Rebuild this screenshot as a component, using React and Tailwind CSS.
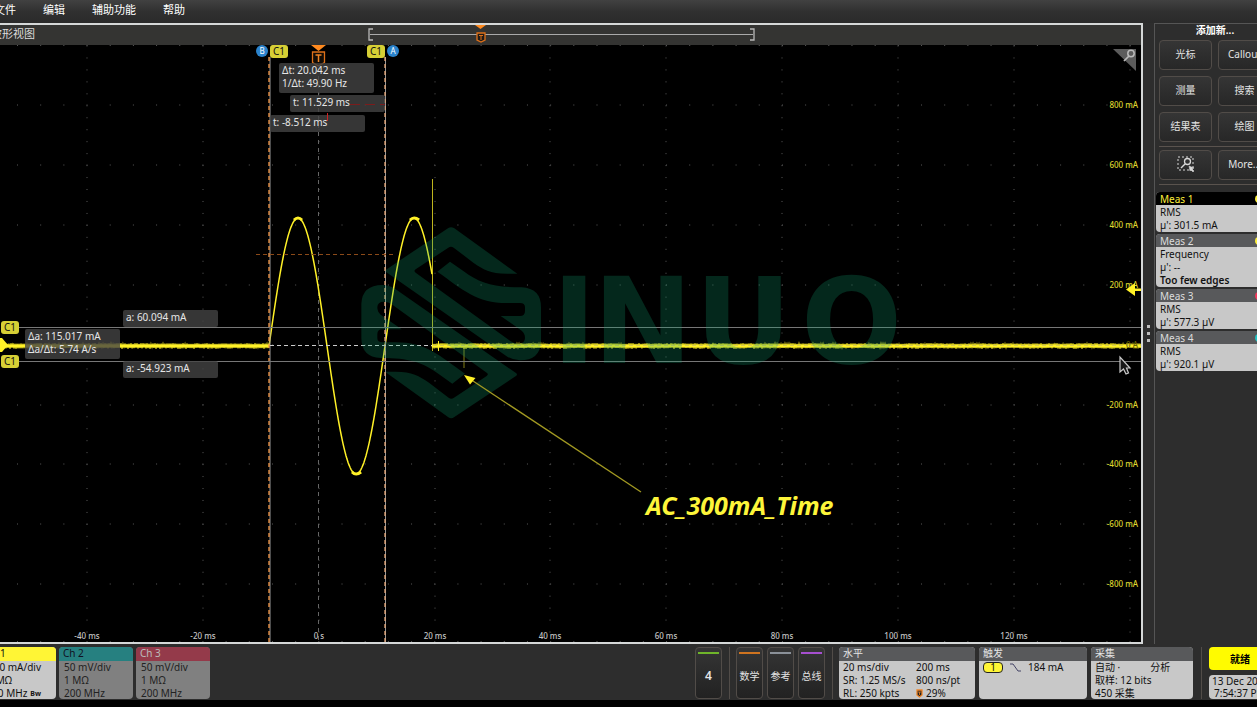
const MENU = ['编辑', '辅助功能', '帮助'];
const ADD_BUTTONS = ['光标', 'Callout', '测量', '搜索', '结果表', '绘图'];

const MEASUREMENTS = [
  { name: 'Meas 1', lines: ['RMS', "µ': 301.5 mA"], dot: 'bg-[#fdf03a]', active: true },
  { name: 'Meas 2', lines: ['Frequency', "µ': --"], warning: 'Too few edges', dot: 'bg-[#fdf03a]' },
  { name: 'Meas 3', lines: ['RMS', "µ': 577.3 µV"], dot: 'bg-[#f0365a]' },
  { name: 'Meas 4', lines: ['RMS', "µ': 920.1 µV"], dot: 'bg-[#1fc4c4]' },
];

const X_DIVS = [87, 203, 319, 435, 550, 666, 782, 898, 1014, 1130];
const Y_DIVS = [105, 165, 225, 285, 345, 405, 464, 524, 584];
const X_LABELS = ['-40 ms', '-20 ms', '0 s', '20 ms', '40 ms', '60 ms', '80 ms', '100 ms', '120 ms'];
const Y_LABELS = ['800 mA', '600 mA', '400 mA', '200 mA', '0 A', '-200 mA', '-400 mA', '-600 mA', '-800 mA'];

// sampled 50 Hz sine between the trigger and the cut-off
function sinePath() {
  const pts = [];
  for (let x = 269; x <= 432; x += 1) {
    const y = 346 - 128 * Math.cos((2 * Math.PI * (x - 298)) / 116);
    pts.push(`${x} ${y.toFixed(1)}`);
  }
  return `M${pts.join('L')}`;
}

// small noise on the zero level
function noisePath(from, to) {
  const pts = [];
  for (let x = from; x <= to; x += 1) {
    const n = Math.sin(x * 12.9898) * 43758.5453;
    const r = n - Math.floor(n);
    pts.push(`${x} ${(x % 2 ? 344 - r : 347 + r * 2).toFixed(1)}`);
  }
  return `M${pts.join('L')}`;
}

const LOGO_HALF =
  'M108 149L295 24Q303 19 312 24L502 161H470C420 161 400 148 370 128L311 83Q303 77 295 83L197 148Q190 153 197 158L480 362Q492 371 505 371Q525 371 525 354Q525 340 515 332L452 288H510Q525 288 525 273V262Q525 249 510 249H470C380 249 340 210 262 155L300 125L340 153C390 190 430 202 515 202Q573 205 573 262V365Q570 421 510 421Q490 421 472 410L108 156Q104 152 108 149Z';

export default function App() {
  return (
    <div className="min-h-screen overflow-hidden bg-black font-['Noto_Sans','Noto_Sans_CJK_SC',sans-serif] text-[10px] leading-3 text-[#e4e4e4]">
      <nav className="flex h-[23px] items-center gap-[27px] overflow-hidden bg-linear-to-b from-[#414141] via-[#303030] to-[#2a2a2a] pb-1 text-[11px] text-white">
        <button className="-ml-[6px] shrink-0">文件</button>
        {MENU.map((m) => (
          <button key={m} className="shrink-0">{m}</button>
        ))}
      </nav>

      <main className="flex bg-[#2d2d2d]">
        <section className="min-w-0 flex-1 border-y-2 border-r-2 border-[#d5d8d8] bg-black">
          <WaveformHeader />
          <Waveform />
        </section>
        <div className="flex w-[11px] shrink-0 flex-col items-center justify-center gap-1">
          <i className="size-[3px] bg-[#bdbdbd]" />
          <i className="size-[3px] bg-[#bdbdbd]" />
          <i className="size-[3px] bg-[#bdbdbd]" />
        </div>
        <Sidebar />
      </main>

      <BottomBar />
    </div>
  );
}

function WaveformHeader() {
  return (
    <header className="h-5 overflow-hidden bg-[#343432]">
      <svg viewBox="0 25 1141 20" className="block w-full">
        <text x="-9" y="38" fontSize="11" fill="#dedede">波形视图</text>
        <path d="M373 29H369V40H373M750 29H754V40H750" fill="none" stroke="#b8b8b8" strokeWidth="1.3" />
        <path d="M370 34.5H753" stroke="#aaa" strokeWidth="1.2" />
        <path d="M475 25H486L480.500 29Z" fill="#ff8a1f" />
        <path d="M477 33H485V40L481 42L477 40Z" fill="#211c18" stroke="#dd701a" strokeWidth="1.3" />
        <path d="M479 35.500H483M481 35.500V40" stroke="#dd701a" strokeWidth="1" />
      </svg>
    </header>
  );
}

function ChannelTag({ x, y }) {
  return (
    <g>
      <rect x={x} y={y} width="18" height="13" rx="3" fill="#d6cf35" />
      <text x={x + 9} y={y + 10} textAnchor="middle" fontSize="10" fill="#111">C1</text>
    </g>
  );
}

function CursorTag({ x, label }) {
  return (
    <g>
      <circle cx={x} cy="51" r="6" fill="#2b83cc" />
      <text x={x} y="54" textAnchor="middle" fontSize="8" fill="#fff">{label}</text>
    </g>
  );
}

function Readout({ x, y, width = 95, lines }) {
  return (
    <g>
      <rect x={x} y={y} width={width} height={lines.length === 2 ? 30 : 17} rx="2" fill="#444" fillOpacity="0.8" />
      {lines.map((line, i) => (
        <text key={line} x={x + 3} y={y + 11 + i * 13} fontSize="10" fill="#e6e6e6">{line}</text>
      ))}
    </g>
  );
}

function Waveform() {
  return (
    <svg viewBox="0 45 1141 597" className="block h-auto w-full">
      {/* graticule */}
      <g stroke="#595959" strokeWidth="1">
        {X_DIVS.map((x) => (
          <path key={x} d={`M${x} 45.500V642`} strokeDasharray="1 10.960" />
        ))}
        {Y_DIVS.map((y) => (
          <path key={y} d={`M17 ${y}H1141`} strokeDasharray="1 22.180" />
        ))}
        <path d="M17 45.500H1141" strokeDasharray="1 22.180" />
        <path d="M17 641.500H1141" strokeDasharray="1 22.180" />
      </g>
      <path d="M318.500 60V642" stroke="#666" strokeDasharray="4 4" />

      {/* trace */}
      <g fill="none" stroke="#fff127">
        <path d={noisePath(0, 269)} strokeWidth="1.200" strokeOpacity="0.800" />
        <path d="M0 346H269M432 346H1141" strokeWidth="3" />
        <path d={noisePath(432, 1141)} strokeWidth="1.200" strokeOpacity="0.800" />
        <path d={sinePath()} strokeWidth="1.500" />
        <path d="M294 220Q298 216 302 220M410 220Q414 216 419 220M352 472Q356 476 361 472" strokeWidth="3" />
        <path d="M432.500 179V351" strokeOpacity="0.750" />
        <path d="M438.500 341V351" />
        <path d="M464 348V368" strokeWidth="1.500" strokeOpacity="0.350" />
      </g>

      {/* cursors */}
      <path d="M270 57V642M385.500 57V642" stroke="#999" />
      <path d="M269 57V642" stroke="#f79a4a" strokeWidth="1.300" strokeDasharray="4 3" />
      <path d="M385 57V642" stroke="#e8a878" strokeWidth="1.300" strokeDasharray="4 3" />
      <path d="M18 327.500H1141M18 361.500H1141" stroke="#777" />
      <path d="M270 345.500H432" stroke="#ccc" strokeDasharray="4 3" />
      <path d="M433 345.500H1141" stroke="#c9bd68" strokeWidth="1" strokeDasharray="4 3" strokeOpacity="0.700" />
      <path d="M256 254.500H396" stroke="#8b4a19" strokeDasharray="4 3" />

      {/* watermark */}
      <g fill="#0fa06e" fillOpacity="0.250">
        <g transform="translate(350 220) scale(0.33333)">
          <path d={LOGO_HALF} />
          <path d={LOGO_HALF} transform="rotate(180 303.500 308)" />
        </g>
        <text x="552 593 695 801" y="363" fontFamily="DejaVu Sans" fontWeight="700" fontSize="119">INUO</text>
      </g>

      {/* axis labels */}
      <g fontSize="8" fontWeight="500" fill="#c4c4c4" textAnchor="middle">
        {X_LABELS.map((label, i) => (
          <text key={label} x={X_DIVS[i]} y="639">{label}</text>
        ))}
      </g>
      <g fontSize="8" fontWeight="500" textAnchor="end">
        {Y_LABELS.map((label, i) => (
          <text key={label} x="1138" y={Y_DIVS[i] + 3} fill={label === '0 A' ? '#6b6500' : '#ddd52e'}>{label}</text>
        ))}
      </g>

      {/* tags on top and left edge */}
      <CursorTag x={262} label="B" />
      <ChannelTag x={270} y={45} />
      <ChannelTag x={367} y={45} />
      <CursorTag x={393} label="A" />
      <path d="M311 45H326L318.500 51Z" fill="#ff8a1f" />
      <path d="M312.500 52H324.500V62.500L318.500 66L312.500 62.500Z" fill="#120c06" stroke="#dd701a" strokeWidth="1.300" />
      <path d="M315.500 55H321.500M318.500 55V62" stroke="#ef8426" strokeWidth="1.500" />
      <ChannelTag x={1} y={321} />
      <ChannelTag x={1} y={355} />
      <path d="M0 338H2L8 345L2 352H0Z" fill="#fff127" />

      <Readout x={279} y={63} lines={['Δt: 20.042 ms', '1/Δt: 49.90 Hz']} />
      <Readout x={290} y={95} lines={['t: 11.529 ms']} />
      <Readout x={270} y={115} lines={['t: -8.512 ms']} />
      <path d="M350 104.500H385" stroke="#7b1c1c" strokeDasharray="10 5" />
      <path d="M327.500 113V121" stroke="#c22" />
      <Readout x={123} y={310} lines={['a: 60.094 mA']} />
      <Readout x={25} y={329} lines={['Δa: 115.017 mA', 'Δa/Δt: 5.74 A/s']} />
      <Readout x={123} y={361} lines={['a: -54.923 mA']} />

      {/* callout */}
      <path d="M641 492L470 379" stroke="#a39a22" strokeWidth="1.300" />
      <path d="M464 375L475.500 378L470 384.500Z" fill="#fff127" />
      <text x="646" y="515" fontSize="25" fontWeight="700" fontStyle="italic" fill="#fdf53a">AC_300mA_Time</text>

      {/* zoom corner, trigger level and pointer */}
      <path d="M1113 49H1136V71Z" fill="#5c5c5c" />
      <circle cx="1131" cy="53.500" r="3.200" fill="none" stroke="#bbb" strokeWidth="1.500" />
      <path d="M1129 56L1124 61" stroke="#bbb" strokeWidth="1.700" />
      <path d="M1126 289.500L1135 283V288.500H1141V291H1135V296Z" fill="#fff127" />
      <path d="M1120 357V372L1123.500 369L1126 374L1128.500 373L1126.500 368H1130Z" fill="#181818" stroke="#c9c9c9" strokeWidth="1.200" />
    </svg>
  );
}

function PanelButton({ children }) {
  return (
    <button className="flex h-[30px] items-center justify-center rounded border border-[#514c48] bg-linear-to-b from-[#353535] to-[#272727] pb-[2px]">
      {children}
    </button>
  );
}

function Sidebar() {
  return (
    <aside className="w-[103px] shrink-0 overflow-hidden border-l border-t border-[#555]">
      <div className="w-[120px] px-1">
        <h2 className="h-4 text-center font-semibold leading-3 text-white">添加新...</h2>
        <div className="grid grid-cols-2 gap-x-[6px] gap-y-[6px]">
          {ADD_BUTTONS.map((b) => (
            <PanelButton key={b}>{b}</PanelButton>
          ))}
        </div>
        <hr className="mb-[3px] mt-1 border-[#5a534e]" />
        <div className="grid grid-cols-2 gap-x-[6px]">
          <PanelButton>
            <svg width="20" height="18" viewBox="0 0 20 18" fill="none" stroke="#d8d8d8" aria-label="缩放">
              <rect x="2" y="2" width="15" height="13" strokeDasharray="2 2" />
              <circle cx="11.500" cy="6.500" r="3" strokeWidth="1.300" />
              <path d="M9 9L5 13" strokeWidth="1.500" />
              <path d="M13 11L18 13L16 14L18 16L17 17L15 15L14 16Z" fill="#d8d8d8" strokeWidth="0.500" />
            </svg>
          </PanelButton>
          <PanelButton>More...</PanelButton>
        </div>
        <hr className="mb-[7px] mt-1 border-[#5a534e]" />
      </div>
      <div className="ml-px flex w-[121px] flex-col gap-[2px]">
        {MEASUREMENTS.map((m) => (
          <article key={m.name} className="overflow-hidden rounded-sm bg-[#c8c8c8] text-[#111]">
            <h3 className={`relative flex h-[13px] items-center px-1 ${m.active ? 'bg-black text-[#fdf03a]' : 'bg-[#58595b] text-[#ddd]'}`}>
              {m.name}
              <i className={`absolute left-[99px] size-2 rounded-full ${m.dot}`} />
            </h3>
            <div className="px-1 pt-px leading-[13px]">
              {m.lines.map((line) => (
                <p key={line}>{line}</p>
              ))}
              {m.warning && <p className="font-semibold">{m.warning}</p>}
            </div>
          </article>
        ))}
      </div>
    </aside>
  );
}

function ChannelCard({ name, lines, head, body }) {
  return (
    <article className={`h-[52px] w-[74px] shrink-0 overflow-hidden rounded-sm ${body}`}>
      <h3 className={`h-[14px] px-1 leading-[13px] ${head}`}>{name}</h3>
      {lines.map((line) => (
        <p key={line} className="pl-[5px] leading-[13px]">{line}</p>
      ))}
    </article>
  );
}

function SourceButton({ label, color, big }) {
  return (
    <button className={`relative flex h-[52px] w-[27px] items-center justify-center rounded border border-[#514c48] bg-linear-to-b from-[#353535] to-[#222] pt-[6px] ${big ? 'text-xs font-semibold' : ''}`}>
      <i className={`absolute inset-x-[2px] top-1 h-[2px] ${color}`} />
      {label}
    </button>
  );
}

function InfoCard({ title, width, children }) {
  return (
    <article className={`h-[52px] overflow-hidden rounded-sm bg-[#c8c8c8] leading-[13px] text-[#111] ${width}`}>
      <h3 className="h-[14px] bg-[#58595b] px-1 text-[#e4e4e4]">{title}</h3>
      {children}
    </article>
  );
}

function BottomBar() {
  return (
    <footer className="flex h-14 items-center justify-between overflow-hidden bg-[#2d2d2d] pt-[2px]">
      <div className="-ml-[19px] flex gap-[3px]">
        <article className="h-[52px] w-[75px] shrink-0 overflow-hidden rounded-sm bg-[#c8c8c8] text-[#111]">
          <h3 className="h-[14px] bg-[#fff535] px-1 leading-[13px]">Ch 1</h3>
          <p className="w-[60px] text-right leading-[13px]">200 mA/div</p>
          <p className="w-[31px] text-right leading-[13px]">1 MΩ</p>
          <p className="flex w-[60px] items-center justify-end gap-[3px] whitespace-nowrap leading-[13px]">
            <span>200 MHz</span>
            <sub className="bottom-0 text-[7px] font-bold leading-none">Bw</sub>
          </p>
        </article>
        <ChannelCard name="Ch 2" lines={['50 mV/div', '1 MΩ', '200 MHz']} head="bg-[#268080] text-[#112]" body="bg-[#808080] text-[#222]" />
        <ChannelCard name="Ch 3" lines={['50 mV/div', '1 MΩ', '200 MHz']} head="bg-[#943a4a] text-[#bbb]" body="bg-[#808080] text-[#222]" />
      </div>

      <div className="-mr-[14px] flex shrink-0 items-center gap-1">
        <SourceButton label="4" color="bg-[#6fb52a]" big />
        <i className="ml-[3px] mr-[2px] h-[52px] w-px bg-[#514c48]" />
        <SourceButton label="数学" color="bg-[#cf7420]" />
        <SourceButton label="参考" color="bg-[#8b9199]" />
        <SourceButton label="总线" color="bg-[#a64fd0]" />
        <i className="ml-[3px] mr-[2px] h-[52px] w-px bg-[#514c48]" />
        <InfoCard title="水平" width="w-[136px]">
          <div className="grid grid-cols-[73px_1fr] whitespace-nowrap pl-1">
            <p>20 ms/div</p>
            <p>200 ms</p>
            <p>SR: 1.25 MS/s</p>
            <p>800 ns/pt</p>
            <p>RL: 250 kpts</p>
            <p className="flex items-center gap-[3px]">
              <svg width="7" height="9" viewBox="0 0 7 9">
                <path d="M1 1H6V6L3.500 8L1 6Z" fill="#222" stroke="#ef8426" strokeWidth="1.300" />
                <path d="M2 3H5M3.500 3V6" stroke="#ef8426" strokeWidth="0.800" />
              </svg>
              29%
            </p>
          </div>
        </InfoCard>
        <InfoCard title="触发" width="w-[108px]">
          <div className="flex items-center gap-[7px] pl-1">
            <span className="h-[11px] w-5 rounded border border-[#222] bg-[#fff535] text-center leading-[9px]">1</span>
            <svg width="11" height="9" viewBox="0 0 11 9" fill="none" stroke="#446">
              <path d="M0 1H3L8 8H11" />
            </svg>
            <span>184 mA</span>
          </div>
        </InfoCard>
        <InfoCard title="采集" width="w-[102px]">
          <div className="pl-1">
            <p className="flex gap-[30px]"><span>自动 ·</span><span>分析</span></p>
            <p>取样: 12 bits</p>
            <p>450 采集</p>
          </div>
        </InfoCard>
        <i className="ml-1 mr-[3px] h-[52px] w-px bg-[#514c48]" />
        <div className="flex h-[52px] w-[62px] flex-col justify-between">
          <button className="h-[23px] rounded bg-[#fffb00] font-semibold text-black">就绪</button>
          <p className="h-6 whitespace-nowrap rounded-sm bg-[#c8c8c8] pl-[3px] text-[#111]">
            13 Dec 2023
            <br />
            <span className="pl-[2px]">7:54:37 PM</span>
          </p>
        </div>
      </div>
    </footer>
  );
}
